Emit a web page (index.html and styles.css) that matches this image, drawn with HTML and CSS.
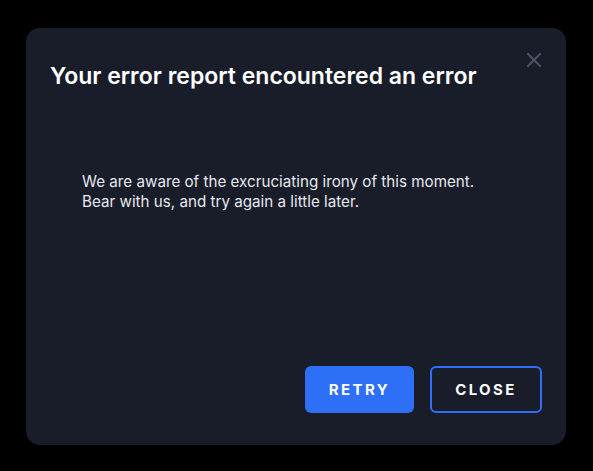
FILE: index.html
```html
<!DOCTYPE html>
<html lang="en">

<head>
    <meta charset="UTF-8">
    <meta name="viewport" content="width=device-width, initial-scale=1.0">
    <title>Error report</title>

    <link rel="stylesheet" href="styles.css">
</head>

<body>
    <div id="overlay">
        <div id="dialog">
            <div class="dialog-head">
                <h1 class="title">Your error report encountered an error</h1>
                <span class="close-x">
                    <svg width="16" height="16" viewBox="0 0 16 16">
                        <path d="M2 2 L14 14 M14 2 L2 14" stroke="#4b5064" stroke-width="2.2" stroke-linecap="round" fill="none"/>
                    </svg>
                </span>
            </div>

            <div class="message">
                <p>We are aware of the excruciating irony of this moment.</p>
                <p>Bear with us, and try again a little later.</p>
            </div>

            <div class="actions">
                <button class="btn btn-primary">RETRY</button>
                <button class="btn btn-outline">CLOSE</button>
            </div>
        </div>
    </div>
</body>

</html>
```

FILE: styles.css
```css
* {
    margin: 0;
    padding: 0;
    box-sizing: border-box;
}

body {
    background: #000000;
    font-family: "Inter", "Noto Sans", sans-serif;
}

#overlay {
    width: 593px;
    height: 471px;
    padding: 28px 0 0 26px;
}

#dialog {
    width: 540px;
    height: 417px;
    background: #191c29;
    border-radius: 14px;
    display: flex;
    flex-direction: column;
    padding: 30px 24px 32px 24px;
}

.dialog-head {
    display: flex;
    justify-content: space-between;
    align-items: flex-start;
}

.title {
    color: #ffffff;
    font-size: 23px;
    font-weight: 600;
    line-height: 36px;
    letter-spacing: 0;
}

.close-x {
    display: block;
    margin-top: -6px;
    margin-right: 0;
}

.message {
    margin-top: 78px;
    padding-left: 32px;
    color: #e6e8ee;
    font-size: 15.2px;
    line-height: 20px;
    flex: 1;
}

.actions {
    display: flex;
    justify-content: flex-end;
    gap: 16px;
}

.btn {
    height: 47px;
    border-radius: 6px;
    font-family: inherit;
    font-size: 15px;
    font-weight: 700;
    letter-spacing: 2.4px;
    color: #ffffff;
    cursor: pointer;
}

.btn-primary {
    width: 109px;
    background: #2d6ff7;
    border: none;
}

.btn-outline {
    width: 112px;
    background: transparent;
    border: 2px solid #2d6ff7;
}
```
